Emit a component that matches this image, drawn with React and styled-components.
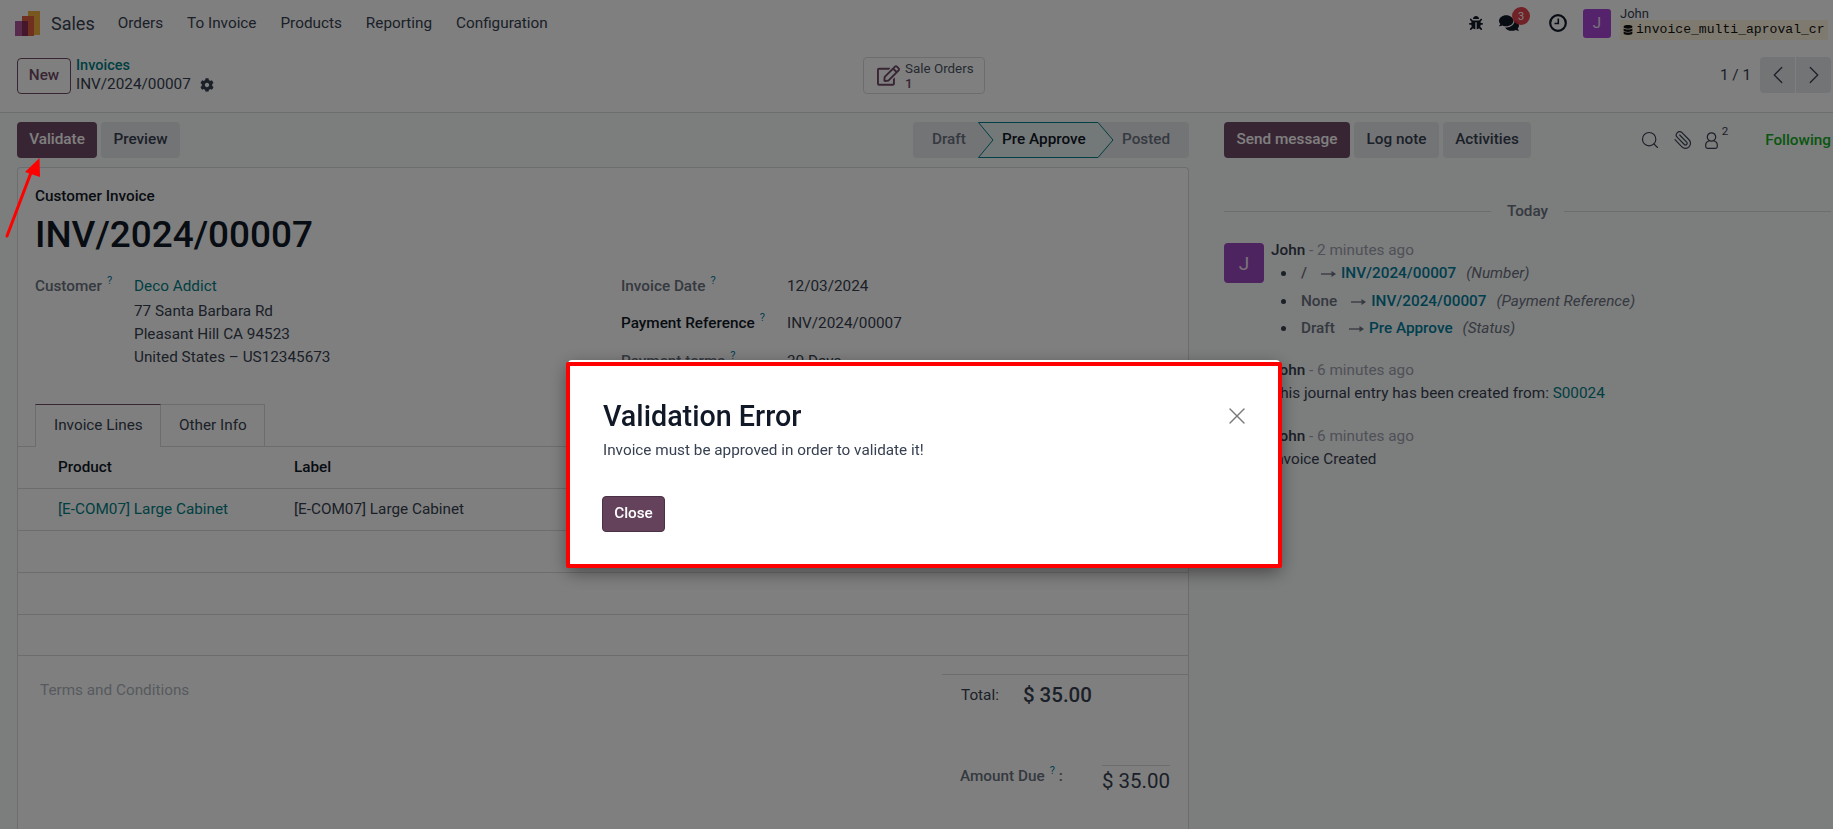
import React from 'react';
import styled, { createGlobalStyle } from 'styled-components';
import { FaBug, FaComments, FaCog, FaDatabase, FaRegEdit } from 'react-icons/fa';
import { Search, Paperclip, ChevronLeft, ChevronRight, X } from 'lucide-react';

const Global = createGlobalStyle`
  html, body { margin: 0; padding: 0; height: 100%; overflow: hidden; background: #fff; }
  body { font-family: Roboto, "Liberation Sans", sans-serif; font-size: 15.3px; color: #374151; }
  * { box-sizing: border-box; }
`;

const Page = styled.div`width: 1833px; height: 829px; overflow: hidden; display: flex; flex-direction: column; background: #fff;`;

const Navbar = styled.header`height: 46px; display: flex; align-items: center; padding-left: 15px; flex: none;`;
const Logo = styled.svg`width: 25px; height: 26px; margin-top: 1px; flex: none;`;
const AppName = styled.span`font-size: 18px; margin-left: 11px; margin-right: 11px; color: #374151;`;
const NavItem = styled.span`font-size: 15.3px; color: #374151; padding: 0 12px;`;
const NavRight = styled.div`margin-left: auto; display: flex; align-items: center; height: 100%;`;
const NavIcon = styled.span`display: flex; position: relative; color: #111827; font-size: ${p => p.$size || 16}px; margin-left: ${p => p.$ml}px;`;
const Badge = styled.span`position: absolute; top: -6px; left: 13px; width: 18px; height: 18px; border-radius: 50%; background: #e0313d; color: #fff; font-size: 11px; display: flex; align-items: center; justify-content: center; opacity: .9;`;
const UserAvatar = styled.span`width: 28px; height: 29px; border-radius: 3px; background: #a946d6; color: #f4e6f6; font-size: 15px; display: flex; align-items: center; justify-content: center; margin-left: 16px;`;
const UserBox = styled.div`margin-left: 9px; width: 213px; display: flex; flex-direction: column; line-height: 14px;`;
const UserName = styled.span`font-size: 13px; color: #374151; line-height: 13px; margin-top: 1px;`;
const DbTag = styled.span`display: flex; align-items: center; height: 20px; width: 208px; padding-left: 3px; background: #fff5e0; color: #111; font-family: "Liberation Mono", monospace; font-size: 13.1px; gap: 3px; white-space: nowrap;`;

const ControlPanel = styled.div`height: 67px; flex: none; border-bottom: 1px solid #d8dadd; display: grid; grid-template-columns: 846px 1fr auto; align-items: center; padding: 0 2px 8px 17px;`;
const CpLeft = styled.div`display: flex; align-items: center; gap: 5px;`;
const NewButton = styled.button`width: 54px; height: 36px; margin-top: 2px; background: #fff; border: 1px solid #714b67; border-radius: 4px; color: #714b67; font: 500 15.3px Roboto, sans-serif; padding: 0 0 2px;`;
const Crumbs = styled.div`display: flex; flex-direction: column; line-height: 19px; font-size: 15.3px;`;
const CrumbLink = styled.span`color: #017e84; font-weight: 500; font-size: 14.5px;`;
const CrumbCurrent = styled.span`display: flex; align-items: center; gap: 9px; color: #374151;`;
const StatButton = styled.div`width: 122px; height: 37px; border: 1px solid #d8dadd; border-radius: 4px; display: flex; align-items: center; padding-left: 13px; gap: 5px; color: #714b67; font-size: 23px;`;
const StatText = styled.div`display: flex; flex-direction: column; line-height: 15px; font-size: 13.4px; color: #4b5563; padding-top: 1px;`;
const StatValue = styled.span`color: #714b67; font-weight: 500;`;
const PagerWrap = styled.div`display: flex; align-items: center; gap: 11px;`;
const PagerText = styled.span`font-size: 15.3px; color: #374151; margin-right: -2px;`;
const PagerButtons = styled.div`display: flex; gap: 1px;`;
const PagerBtn = styled.span`width: 35px; height: 36px; background: #e7e9ed; display: flex; align-items: center; justify-content: center; color: #374151; border-radius: ${p => p.$first ? '4px 0 0 4px' : '0 4px 4px 0'};`;

const Main = styled.div`flex: 1; display: flex; min-height: 0; background: #f9fafb;`;
const FormCol = styled.div`width: 1189px; flex: none; padding: 9px 0 0 17px; display: flex; flex-direction: column; min-height: 0;`;
const Toolbar = styled.div`display: flex; align-items: center; height: 36px; gap: 4px; flex: none;`;
const Btn = styled.button`height: 36px; padding: 0 0 2px; border: 0; border-radius: 4px; background: ${p => p.$primary ? '#714b67' : '#e7e9ed'}; color: ${p => p.$primary ? '#fff' : '#374151'}; font: 500 15.3px Roboto, sans-serif; white-space: nowrap; width: ${p => p.$w}px;`;
const StatusBar = styled.div`margin-left: auto; width: 276px; height: 36px; background: #e7e9ed; border-radius: 4px; display: flex; align-items: center; font-weight: 500; font-size: 15.3px; color: #6b7280;`;
const StatusDraft = styled.span`width: 65px; padding: 0 0 2px 19px;`;
const StatusActive = styled.span`position: relative; width: 135px; height: 36px; display: flex; align-items: center; padding: 0 0 2px 24px; color: #111827;`;
const StatusShape = styled.svg`position: absolute; left: 0; top: 0; width: 136px; height: 36px; overflow: visible;`;
const StatusLabel = styled.span`position: relative;`;
const StatusPosted = styled.span`padding: 0 0 2px 9px;`;

const Sheet = styled.div`margin-top: 9px; flex: 1; background: #fff; border: 1px solid #d8dadd; border-radius: 4px 4px 0 0; border-bottom: 0; display: flex; flex-direction: column; min-height: 0;`;
const SheetHead = styled.div`padding: 18px 0 0 17px;`;
const TypeLabel = styled.div`font-size: 15.3px; line-height: 20px; font-weight: 500; color: #111827;`;
const Title = styled.h1`margin: 7px 0 0; font-size: 36.9px; line-height: 44px; font-weight: 500; color: #111827;`;
const Groups = styled.div`display: grid; grid-template-columns: 586px 1fr; height: 128px; margin-top: 19px; padding-left: 17px;`;
const Fields = styled.div`display: grid; grid-template-columns: ${p => p.$label}px 1fr; align-content: start; font-size: 15.3px;`;
const Field = styled.div`min-height: ${p => p.$h || 23}px; line-height: 20px;`;
const FieldLabel = styled.span`font-weight: 500; color: ${p => p.$strong ? '#111827' : '#6b7280'};`;
const Help = styled.sup`color: #0180a5; font-size: 11px; font-weight: 400; margin-left: 5px; line-height: 0; vertical-align: 7px;`;
const LinkText = styled.span`color: #017e84;`;
const Tabs = styled.div`height: 43px; display: flex; padding-left: 17px; border-bottom: 1px solid #d8dadd; flex: none;`;
const Tab = styled.div`height: ${p => p.$active ? 43 : 42}px; padding: 0 0 2px 18px; display: flex; align-items: center; font-size: 15.3px; background: #fff; border: 1px solid #d8dadd; border-left-width: ${p => p.$active ? 1 : 0}px; border-bottom: 0; border-top-color: ${p => p.$active ? '#714b67' : '#d8dadd'}; color: #374151; width: ${p => p.$w}px;`;
const TableRow = styled.div`height: ${p => p.$h || 42}px; border-bottom: 1px solid #d8dadd; display: grid; grid-template-columns: 236px 1fr; align-items: center; padding: 0 0 2px 40px; font-size: 15.3px; font-weight: ${p => p.$head ? 500 : 400}; color: ${p => p.$head ? '#111827' : '#374151'};`;
const Footer = styled.div`display: flex; justify-content: space-between;`;
const Terms = styled.div`padding: 24px 0 0 22px; line-height: 20px; font-size: 15.3px; color: #adb5bd;`;
const Totals = styled.div`width: 246px; margin-top: 18px; border-top: 1px solid #d8dadd; height: 140px; display: flex; flex-direction: column;`;
const TotalRow = styled.div`display: flex; align-items: center; height: 39px; padding-left: 19px; font-size: 15.3px;`;
const TotalAmount = styled.span`font-size: 20.5px; font-weight: 500; color: #374151; margin-left: 24px;`;
const DueRow = styled.div`display: flex; margin-top: 51px; justify-content: space-between; padding: 0 18px; align-items: flex-start;`;
const DueLabel = styled.span`font-weight: 500; color: #6b7280; line-height: 20px; margin-top: 1px; font-size: 15.3px;`;
const DueAmount = styled.span`font-size: 20.5px; color: #374151; border-top: 1px solid #d8dadd; line-height: 30px;`;

const Chatter = styled.aside`flex: 1; padding: 9px 2px 0 35px; display: flex; flex-direction: column; min-width: 0;`;
const ChatterTop = styled.div`display: flex; align-items: center; height: 36px; gap: 4px; flex: none;`;
const ChatterIcons = styled.div`display: flex; align-items: center; margin-left: auto; color: #374151; height: 100%;`;
const ChatterIcon = styled.span`display: flex; position: relative; margin-left: ${p => p.$ml}px; font-size: 15px;`;
const ClipIcon = styled(Paperclip)`transform: scaleX(-1);`;
const FollowerCount = styled.span`font-size: 11.5px; margin-left: 4px; margin-top: -8px; color: #374151;`;
const Following = styled.span`color: #12ad20; font-weight: 500; font-size: 15.3px; margin-left: 37px;`;
const DateSep = styled.div`display: flex; align-items: center; gap: 16px; margin-top: 43px; line-height: 20px; font-size: 15.3px; font-weight: 500; color: #6b7280; &::before, &::after { content: ''; flex: 1; height: 1px; background: #d8dadd; }`;
const Message = styled.div`display: flex; gap: 7px; margin-top: ${p => p.$mt}px;`;
const MsgAvatar = styled.span`width: 40px; height: 40px; margin-top: 3px; flex: none; border-radius: 4px; background: #9a47c0; color: #f4e6f6; font-size: 19px; display: flex; align-items: center; justify-content: center;`;
const MsgBody = styled.div`flex: 1; min-width: 0; font-size: 15.3px;`;
const Author = styled.div`line-height: 20px; font-weight: 500; color: #374151;`;
const When = styled.span`font-weight: 400; color: #9ca3af;`;
const Changes = styled.ul`margin: 0; padding: 0 0 0 30px; list-style: none;`;
const Change = styled.li`position: relative; height: 27.5px; line-height: 27px; color: #6b7280; &::before { content: ''; position: absolute; left: -20px; top: 11px; width: 5px; height: 5px; border-radius: 50%; background: #374151; }`;
const OldVal = styled.span`font-weight: 500; color: #6b7280; margin-right: 14px;`;
const ArrowIcon = styled.svg`width: 15px; height: 8px; margin-right: 5px;`;
const NewVal = styled.span`font-weight: 500; color: #017e9c; margin-right: 10px;`;
const Field2 = styled.em`color: #6b7280;`;
const MsgText = styled.div`line-height: 20px; margin-top: ${p => p.$mt}px; color: #374151;`;

const Backdrop = styled.div`position: fixed; inset: 0; background: rgba(0,0,0,.5);`;
const Modal = styled.div`position: fixed; top: 360px; left: 568px; width: 712px; height: 206px; background: #fff; border-radius: 4px; padding: 39px 35px 0; box-shadow: 0 6px 18px rgba(0,0,0,.45);`;
const ModalFrame = styled.div`position: absolute; top: 2px; left: -2px; right: -2px; bottom: -2px; border: 4px solid #ff0000; border-radius: 2px; pointer-events: none;`;
const ModalHead = styled.div`display: flex; justify-content: space-between; align-items: center; height: 34px;`;
const ModalTitle = styled.h2`margin: 0; font-size: 28.7px; font-weight: 500; color: #111827; line-height: 34px;`;
const CloseX = styled.span`display: flex; color: #7a7a7a; margin-right: -6px;`;
const ModalText = styled.p`margin: 7px 0 0; font-size: 15.3px; line-height: 20px; color: #374151;`;
const CloseBtn = styled.button`display: block; margin-top: 36px; margin-left: -1px; width: 63px; height: 36px; background: #64425b; border: 1px solid #4b3145; border-radius: 4px; color: #fff; font: 500 15.3px Roboto, sans-serif; padding: 0 0 2px;`;
const Annotation = styled.svg`position: fixed; left: 0; top: 150px; width: 50px; height: 95px;`;

function Arrow() {
  return <ArrowIcon viewBox="0 0 15 8"><path d="M0 4h12" stroke="currentColor" strokeWidth="1.3" fill="none" /><path d="M10.5 1 15 4l-4.5 3z" fill="currentColor" /></ArrowIcon>;
}

function ClockIcon() {
  return (
    <svg width="18" height="18" viewBox="0 0 18 18" fill="none" stroke="currentColor">
      <circle cx="9" cy="9" r="7.8" strokeWidth="2.2" />
      <path d="M9.3 4.5v5H5.5" strokeWidth="1.6" />
    </svg>
  );
}

function FollowerIcon() {
  return (
    <svg width="13" height="17" viewBox="0 0 13 17" fill="none" stroke="currentColor" strokeWidth="1.2">
      <ellipse cx="6.5" cy="5" rx="4.2" ry="4.2" />
      <path d="M4 9C2 9.500.7 11 .7 13v1.500c0 1 .8 1.800 1.800 1.800h8c1 0 1.800-.8 1.800-1.800V13c0-2-1.300-3.500-3.300-4" />
    </svg>
  );
}

export default function App() {
  return (
    <Page>
      <Global />
      <Navbar>
        <Logo viewBox="0 0 25 26">
          <rect x="13" y="0" width="12" height="24" fill="#f0b13e" />
          <rect x="7" y="5" width="12" height="20" fill="#e0603f" />
          <rect x="0" y="10" width="13" height="15" fill="#b0559c" />
          <rect x="7" y="10" width="6" height="15" fill="#8c2c56" />
        </Logo>
        <AppName>Sales</AppName>
        <NavItem>Orders</NavItem>
        <NavItem>To Invoice</NavItem>
        <NavItem>Products</NavItem>
        <NavItem>Reporting</NavItem>
        <NavItem>Configuration</NavItem>
        <NavRight>
          <NavIcon $size={14}><FaBug /></NavIcon>
          <NavIcon $size={20} $ml={16}><FaComments /><Badge>3</Badge></NavIcon>
          <NavIcon $ml={30}><ClockIcon /></NavIcon>
          <UserAvatar>J</UserAvatar>
          <UserBox>
            <UserName>John</UserName>
            <DbTag><FaDatabase size={10} />invoice_multi_aproval_cr</DbTag>
          </UserBox>
        </NavRight>
      </Navbar>
      <ControlPanel>
        <CpLeft>
          <NewButton>New</NewButton>
          <Crumbs>
            <CrumbLink>Invoices</CrumbLink>
            <CrumbCurrent>INV/2024/00007 <FaCog size={14} /></CrumbCurrent>
          </Crumbs>
        </CpLeft>
        <div>
          <StatButton>
            <FaRegEdit />
            <StatText>Sale Orders<StatValue>1</StatValue></StatText>
          </StatButton>
        </div>
        <PagerWrap>
          <PagerText>1 / 1</PagerText>
          <PagerButtons>
            <PagerBtn $first><ChevronLeft size={30} strokeWidth={1} /></PagerBtn>
            <PagerBtn><ChevronRight size={30} strokeWidth={1} /></PagerBtn>
          </PagerButtons>
        </PagerWrap>
      </ControlPanel>
      <Main>
        <FormCol>
          <Toolbar>
            <Btn $primary $w={80}>Validate</Btn>
            <Btn $w={79}>Preview</Btn>
            <StatusBar>
              <StatusDraft>Draft</StatusDraft>
              <StatusActive>
                <StatusShape viewBox="0 0 136 36">
                  <polygon points="0.5,0.5 120,0.5 135,18 120,35.5 0.5,35.5 15,18" fill="#e6f2f3" stroke="#017e84" strokeWidth="1" />
                </StatusShape>
                <StatusLabel>Pre Approve</StatusLabel>
              </StatusActive>
              <StatusPosted>Posted</StatusPosted>
            </StatusBar>
          </Toolbar>
          <Sheet>
            <SheetHead>
              <TypeLabel>Customer Invoice</TypeLabel>
              <Title>INV/2024/00007</Title>
            </SheetHead>
            <Groups>
              <Fields $label={99}>
                <Field $h={25}><FieldLabel>Customer</FieldLabel><Help>?</Help></Field>
                <Field $h={25}><LinkText>Deco Addict</LinkText></Field>
                <Field />
                <Field>77 Santa Barbara Rd</Field>
                <Field />
                <Field>Pleasant Hill CA 94523</Field>
                <Field />
                <Field>United States – US12345673</Field>
              </Fields>
              <Fields $label={166}>
                <Field $h={37}><FieldLabel>Invoice Date</FieldLabel><Help>?</Help></Field>
                <Field $h={37}>12/03/2024</Field>
                <Field $h={38}><FieldLabel $strong>Payment Reference</FieldLabel><Help>?</Help></Field>
                <Field $h={38}>INV/2024/00007</Field>
                <Field><FieldLabel>Payment terms</FieldLabel><Help>?</Help></Field>
                <Field>30 Days</Field>
              </Fields>
            </Groups>
            <Tabs>
              <Tab $active $w={126}>Invoice Lines</Tab>
              <Tab $w={104}>Other Info</Tab>
            </Tabs>
            <TableRow $head><span>Product</span><span>Label</span></TableRow>
            <TableRow><LinkText>[E-COM07] Large Cabinet</LinkText><span>[E-COM07] Large Cabinet</span></TableRow>
            <TableRow />
            <TableRow />
            <TableRow $h={41} />
            <Footer>
              <Terms>Terms and Conditions</Terms>
              <Totals>
                <TotalRow>Total:<TotalAmount>$ 35.00</TotalAmount></TotalRow>
                <DueRow>
                  <DueLabel>Amount Due<Help>?</Help> :</DueLabel>
                  <DueAmount>$ 35.00</DueAmount>
                </DueRow>
              </Totals>
            </Footer>
          </Sheet>
        </FormCol>
        <Chatter>
          <ChatterTop>
            <Btn $primary $w={126}>Send message</Btn>
            <Btn $w={85}>Log note</Btn>
            <Btn $w={88}>Activities</Btn>
            <ChatterIcons>
              <ChatterIcon><Search size={20} strokeWidth={1.4} /></ChatterIcon>
              <ChatterIcon $ml={13}><ClipIcon size={20} strokeWidth={1.4} /></ChatterIcon>
              <ChatterIcon $ml={12}><FollowerIcon /><FollowerCount>2</FollowerCount></ChatterIcon>
              <Following>Following</Following>
            </ChatterIcons>
          </ChatterTop>
          <DateSep>Today</DateSep>
          <Message $mt={19}>
            <MsgAvatar>J</MsgAvatar>
            <MsgBody>
              <Author>John <When>- 2 minutes ago</When></Author>
              <Changes>
                <Change><OldVal>/</OldVal><Arrow /><NewVal>INV/2024/00007</NewVal><Field2>(Number)</Field2></Change>
                <Change><OldVal>None</OldVal><Arrow /><NewVal>INV/2024/00007</NewVal><Field2>(Payment Reference)</Field2></Change>
                <Change><OldVal>Draft</OldVal><Arrow /><NewVal>Pre Approve</NewVal><Field2>(Status)</Field2></Change>
              </Changes>
            </MsgBody>
          </Message>
          <Message $mt={17}>
            <MsgAvatar>J</MsgAvatar>
            <MsgBody>
              <Author>John <When>- 6 minutes ago</When></Author>
              <MsgText $mt={3}>This journal entry has been created from: <LinkText>S00024</LinkText></MsgText>
            </MsgBody>
          </Message>
          <Message $mt={23}>
            <MsgAvatar>J</MsgAvatar>
            <MsgBody>
              <Author>John <When>- 6 minutes ago</When></Author>
              <MsgText $mt={3}>Invoice Created</MsgText>
            </MsgBody>
          </Message>
        </Chatter>
      </Main>
      <Backdrop />
      <Annotation viewBox="0 0 50 95">
        <line x1="7" y1="86" x2="32" y2="20" stroke="#ff0000" strokeWidth="3" strokeLinecap="round" />
        <polygon points="39.5,8 25,22 40,27" fill="#ff0000" />
      </Annotation>
      <Modal>
        <ModalHead>
          <ModalTitle>Validation Error</ModalTitle>
          <CloseX><X size={28} strokeWidth={1.2} /></CloseX>
        </ModalHead>
        <ModalText>Invoice must be approved in order to validate it!</ModalText>
        <CloseBtn>Close</CloseBtn>
        <ModalFrame />
      </Modal>
    </Page>
  );
}
